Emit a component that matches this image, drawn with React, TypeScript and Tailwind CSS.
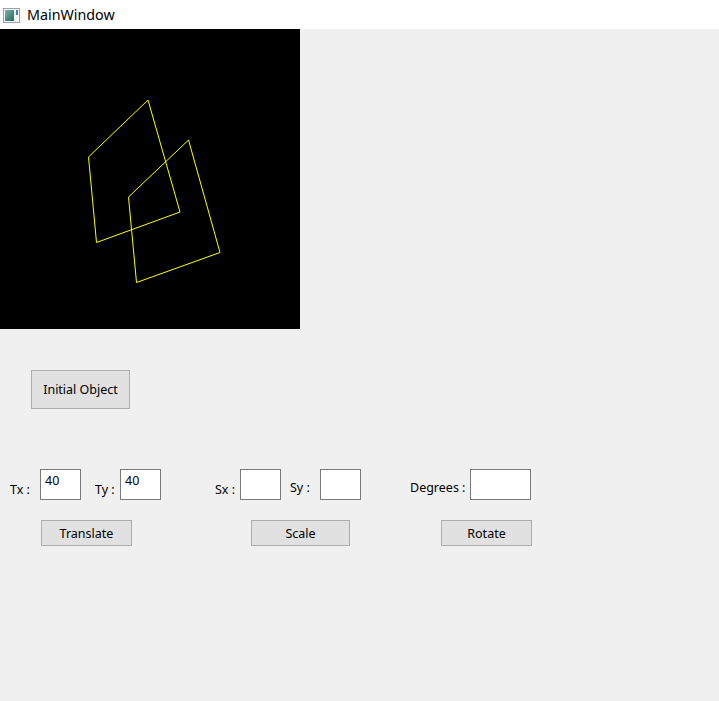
import React from "react";

const font = { fontFamily: '"Noto Sans", "Open Sans", sans-serif' };

function Btn({ label, className }: { label: string; className: string }) {
  return (
    <div
      className={`flex items-center justify-center border border-[#adadad] bg-[#e1e1e1] pt-[2px] text-[12.5px] text-black ${className}`}
    >
      {label}
    </div>
  );
}

function Field({ value, className }: { value?: string; className: string }) {
  return (
    <div className={`border border-[#7a7a7a] bg-white pl-[4px] pt-[3px] text-[12.5px] leading-[16px] text-black ${className}`}>
      {value}
    </div>
  );
}

function Label({ text, className }: { text: string; className: string }) {
  return <div className={`pt-[13px] text-[12.5px] leading-[16px] text-black ${className}`}>{text}</div>;
}

export default function App() {
  return (
    <div className="w-[719px] h-[701px] bg-[#f0f0f0] flex flex-col overflow-hidden" style={font}>
      <div className="h-[29px] bg-white flex items-center shrink-0">
        <svg width="17" height="15" viewBox="0 0 17 15" className="ml-[3px] mt-[1px]">
          <rect x="0.5" y="0.5" width="16" height="14" fill="#f4f6f6" stroke="#9aa3a6" />
          <defs>
            <linearGradient id="g" x1="0" y1="0" x2="1" y2="1">
              <stop offset="0" stopColor="#7fb0a8" />
              <stop offset="1" stopColor="#1f6b5e" />
            </linearGradient>
          </defs>
          <rect x="2" y="2" width="9" height="11" fill="url(#g)" />
          <rect x="13" y="2" width="2" height="5" fill="#3c7fc4" />
        </svg>
        <span className="ml-[7px] text-[14.3px] text-black" style={{ fontFamily: '"Noto Sans", sans-serif' }}>
          MainWindow
        </span>
      </div>
      <div className="w-[300px] h-[300px] bg-black shrink-0">
        <svg width="300" height="300" viewBox="0 0 300 300">
          <polygon
            points="148,71 88.5,128 96.5,213.5 180,183"
            fill="none"
            stroke="#ffff00"
            strokeWidth="1"
          />
          <polygon
            points="188.5,111 128.5,168 136.5,253.5 220,223.5"
            fill="none"
            stroke="#ffff00"
            strokeWidth="1"
          />
        </svg>
      </div>
      <Btn label="Initial Object" className="mt-[41px] ml-[31px] w-[99px] h-[39px]" />
      <div className="mt-[60px] flex items-start">
        <Label text="Tx :" className="ml-[10px] w-[30px]" />
        <Field value="40" className="w-[41px] h-[31px]" />
        <Label text="Ty :" className="ml-[14px] w-[25px]" />
        <Field value="40" className="w-[41px] h-[31px]" />
        <Label text="Sx :" className="ml-[54px] w-[25px]" />
        <Field className="w-[41px] h-[31px]" />
        <Label text="Sy :" className="ml-[9px] w-[30px] !pt-[11px]" />
        <Field className="w-[41px] h-[31px]" />
        <Label text="Degrees :" className="ml-[49px] w-[60px] !pt-[11px]" />
        <Field className="w-[61px] h-[31px]" />
      </div>
      <div className="mt-[20px] flex">
        <Btn label="Translate" className="ml-[41px] w-[91px] h-[26px]" />
        <Btn label="Scale" className="ml-[119px] w-[99px] h-[26px]" />
        <Btn label="Rotate" className="ml-[91px] w-[91px] h-[26px]" />
      </div>
    </div>
  );
}
